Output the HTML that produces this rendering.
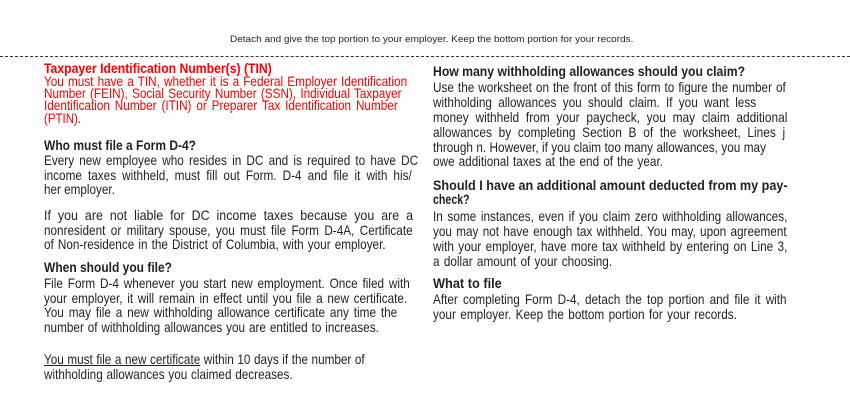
<!DOCTYPE html>
<html><head><meta charset="utf-8"><style>
html,body{margin:0;padding:0;background:#fff;width:850px;height:400px;overflow:hidden;position:relative}
.l{position:absolute;white-space:nowrap;font-family:"Liberation Sans",sans-serif;font-size:14px;line-height:14px;height:14px;color:#231f20}
.l span{display:inline-block;transform-origin:0 0}
.b{font-weight:bold;font-size:13.5px}
.r{color:#ff0000}
.hd{font-size:9.5px}
.dash{position:absolute;top:56px;left:0;width:850px;border-top:1.3px dashed #333}
u{text-decoration:underline}
</style></head><body>
<div class="l hd" style="left:230px;top:33px;width:403px"><span>Detach and give the top portion to your employer. Keep the bottom portion for your records.</span></div>
<div class="dash"></div>

<div class="l b r" style="left:44px;top:62px;width:228px"><span>Taxpayer Identification Number(s) (TIN)</span></div>
<div class="l r" style="left:44px;top:74px;width:363px"><span>You must have a TIN, whether it is a Federal Employer Identification</span></div>
<div class="l r" style="left:44px;top:86px;width:358px"><span>Number (FEIN), Social Security Number (SSN), Individual Taxpayer</span></div>
<div class="l r" style="left:44px;top:98px;width:354px"><span>Identification Number (ITIN) or Preparer Tax Identification Number</span></div>
<div class="l r" style="left:44px;top:111px;width:37px"><span>(PTIN).</span></div>

<div class="l b" style="left:44px;top:139px;width:152px"><span>Who must file a Form D-4?</span></div>
<div class="l" style="left:44px;top:153px;width:374px"><span>Every new employee who resides in DC and is required to have DC</span></div>
<div class="l" style="left:44px;top:168px;width:368px"><span>income taxes withheld, must fill out Form. D-4 and file it with his/</span></div>
<div class="l" style="left:44px;top:182px;width:71px"><span>her employer.</span></div>
<div class="l" style="left:44px;top:208px;width:369px"><span>If you are not liable for DC income taxes because you are a</span></div>
<div class="l" style="left:44px;top:223px;width:369px"><span>nonresident or military spouse, you must file Form D-4A, Certificate</span></div>
<div class="l" style="left:44px;top:237px;width:342px"><span>of Non-residence in the District of Columbia, with your employer.</span></div>
<div class="l b" style="left:44px;top:261px;width:128px"><span>When should you file?</span></div>
<div class="l" style="left:44px;top:276px;width:366px"><span>File Form D-4 whenever you start new employment. Once filed with</span></div>
<div class="l" style="left:44px;top:291px;width:363px"><span>your employer, it will remain in effect until you file a new certificate.</span></div>
<div class="l" style="left:44px;top:305px;width:353px"><span>You may file a new withholding allowance certificate any time the</span></div>
<div class="l" style="left:44px;top:320px;width:335px"><span>number of withholding allowances you are entitled to increases.</span></div>
<div class="l" style="left:44px;top:352px;width:321px"><span><u>You must file a new certificate</u> within 10 days if the number of</span></div>
<div class="l" style="left:44px;top:367px;width:249px"><span>withholding allowances you claimed decreases.</span></div>

<div class="l b" style="left:433px;top:65px;width:312px"><span>How many withholding allowances should you claim?</span></div>
<div class="l" style="left:433px;top:80px;width:353px"><span>Use the worksheet on the front of this form to figure the number of</span></div>
<div class="l" style="left:433px;top:95px;width:323px"><span>withholding allowances you should claim. If you want less</span></div>
<div class="l" style="left:433px;top:110px;width:354px"><span>money withheld from your paycheck, you may claim additional</span></div>
<div class="l" style="left:433px;top:125px;width:352px"><span>allowances by completing Section B of the worksheet, Lines j</span></div>
<div class="l" style="left:433px;top:140px;width:333px"><span>through n. However, if you claim too many allowances, you may</span></div>
<div class="l" style="left:433px;top:154px;width:230px"><span>owe additional taxes at the end of the year.</span></div>
<div class="l b" style="left:433px;top:179px;width:355px"><span>Should I have an additional amount deducted from my pay-</span></div>
<div class="l b" style="left:433px;top:193px;width:37px"><span>check?</span></div>
<div class="l" style="left:433px;top:209px;width:354px"><span>In some instances, even if you claim zero withholding allowances,</span></div>
<div class="l" style="left:433px;top:224px;width:354px"><span>you may not have enough tax withheld. You may, upon agreement</span></div>
<div class="l" style="left:433px;top:239px;width:354px"><span>with your employer, have more tax withheld by entering on Line 3,</span></div>
<div class="l" style="left:433px;top:254px;width:179px"><span>a dollar amount of your choosing.</span></div>
<div class="l b" style="left:433px;top:277px;width:69px"><span>What to file</span></div>
<div class="l" style="left:433px;top:292px;width:354px"><span>After completing Form D-4, detach the top portion and file it with</span></div>
<div class="l" style="left:433px;top:307px;width:304px"><span>your employer. Keep the bottom portion for your records.</span></div>

<script>
var BASE=0.84;
document.querySelectorAll('.l').forEach(function(d){
  var s=d.firstElementChild, w=parseFloat(d.style.width);
  var sw=s.offsetWidth; if(!sw) return;
  if(d.classList.contains('b')||d.classList.contains('hd')){
    s.style.transform='scaleX('+Math.min(1.1,w/sw)+')'; return;
  }
  var scaled=sw*BASE;
  if(scaled>w){ s.style.transform='scaleX('+(w/sw)+')'; return; }
  var gaps=(s.textContent.match(/ /g)||[]).length;
  if(gaps>0){
    var extra=Math.min(4,(w-scaled)/BASE/gaps);
    s.style.wordSpacing=extra+'px';
    sw=s.offsetWidth;
  }
  s.style.transform='scaleX('+Math.min(0.95,w/sw)+')';
});
</script>
</body></html>
